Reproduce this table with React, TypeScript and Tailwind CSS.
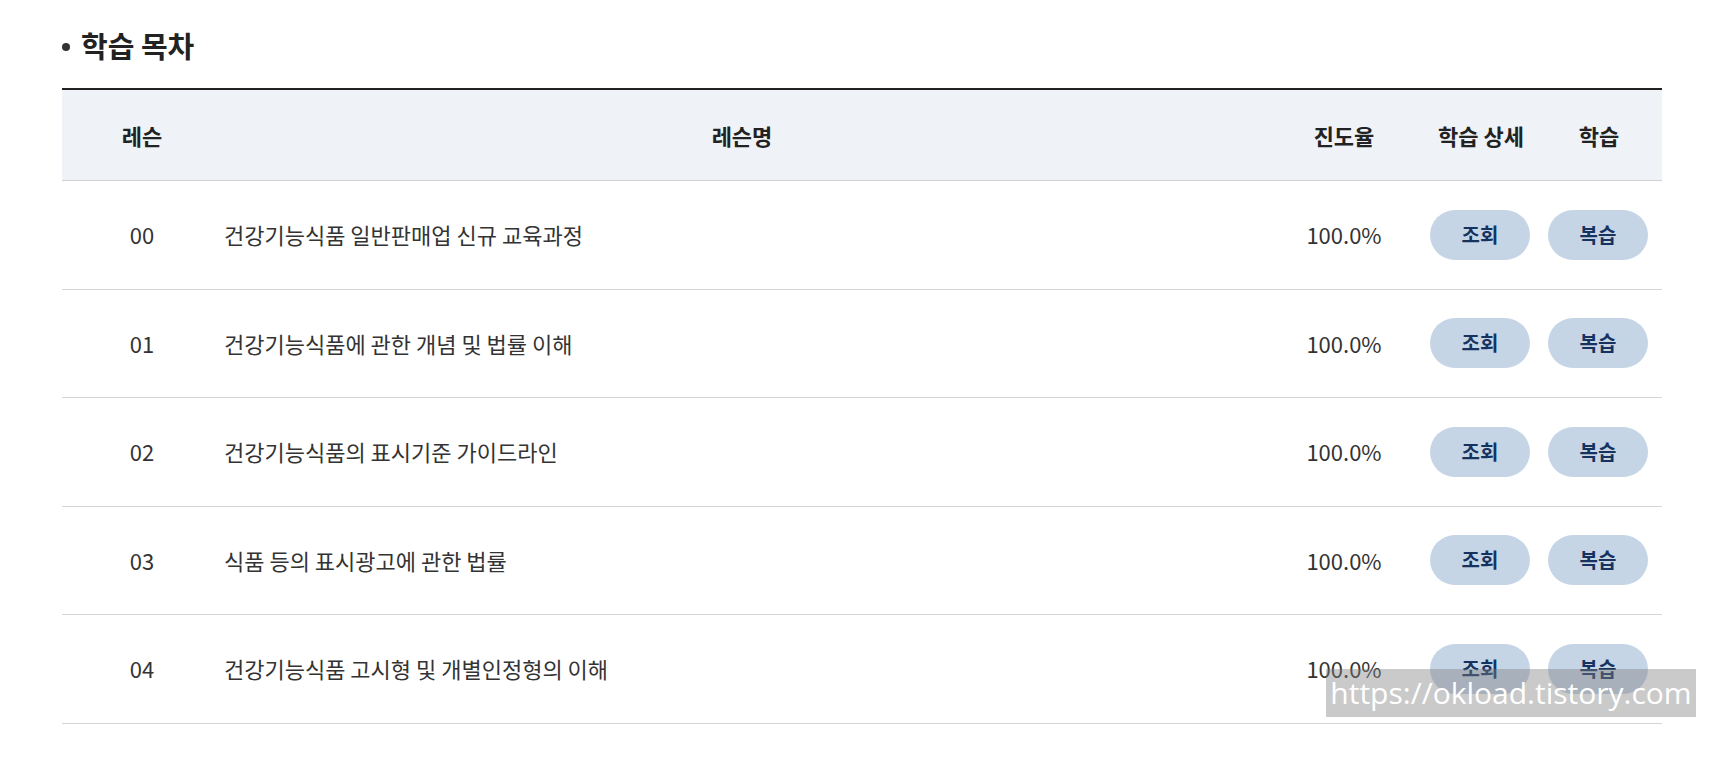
const lessons = [
  { no: '00', name: '건강기능식품 일반판매업 신규 교육과정', rate: '100.0%' },
  { no: '01', name: '건강기능식품에 관한 개념 및 법률 이해', rate: '100.0%' },
  { no: '02', name: '건강기능식품의 표시기준 가이드라인', rate: '100.0%' },
  { no: '03', name: '식품 등의 표시광고에 관한 법률', rate: '100.0%' },
  { no: '04', name: '건강기능식품 고시형 및 개별인정형의 이해', rate: '100.0%' },
];

const cols = 'grid grid-cols-[160px_1040px_164px_110px_126px]';

function PillButton({ label }: { label: string }) {
  return (
    <button className="h-[50px] w-[100px] rounded-full bg-[#c5d5e6] text-[20px] font-bold text-[#16335f]">
      {label}
    </button>
  );
}

export default function App() {
  return (
    <div
      className="relative min-h-[757px] w-[1736px] bg-white text-[#222]"
      style={{ fontFamily: '"Noto Sans CJK KR", "Noto Sans", sans-serif' }}
    >
      <div className="ml-[62px] w-[1600px] pt-[26px]">
        <h2 className="flex h-[40px] items-center text-[29px] font-bold text-[#222]">
          <span className="mr-[11px] mt-[2px] h-[8px] w-[8px] rounded-full bg-[#333]" />
          학습 목차
        </h2>

        <div className="mt-[22px] border-t-2 border-[#222]">
          <div className={`${cols} h-[91px] items-center border-b border-[#d0d0d0] bg-[#eff3f7] text-[22px] font-bold text-[#222]`}>
            <div className="text-center">레슨</div>
            <div className="text-center">레슨명</div>
            <div className="text-center">진도율</div>
            <div className="text-center">학습 상세</div>
            <div className="text-center">학습</div>
          </div>

          {lessons.map((l) => (
            <div key={l.no} className={`${cols} h-[108.5px] items-center border-b border-[#d5d5d5] text-[22px] text-[#333]`}>
              <div className="text-center">{l.no}</div>
              <div className="pl-[2px]">{l.name}</div>
              <div className="text-center">{l.rate}</div>
              <div className="flex justify-center pr-[2px]">
                <PillButton label="조회" />
              </div>
              <div className="flex justify-center pr-[2px]">
                <PillButton label="복습" />
              </div>
            </div>
          ))}
        </div>
      </div>

      <div
        className="absolute left-[1326px] top-[669px] flex h-[48px] w-[370px] items-center justify-center bg-[rgba(128,128,128,0.42)] text-[30px] leading-none text-white"
        style={{ fontFamily: '"Open Sans", "DejaVu Sans", sans-serif' }}
      >
        https://okload.tistory.com
      </div>
    </div>
  );
}
